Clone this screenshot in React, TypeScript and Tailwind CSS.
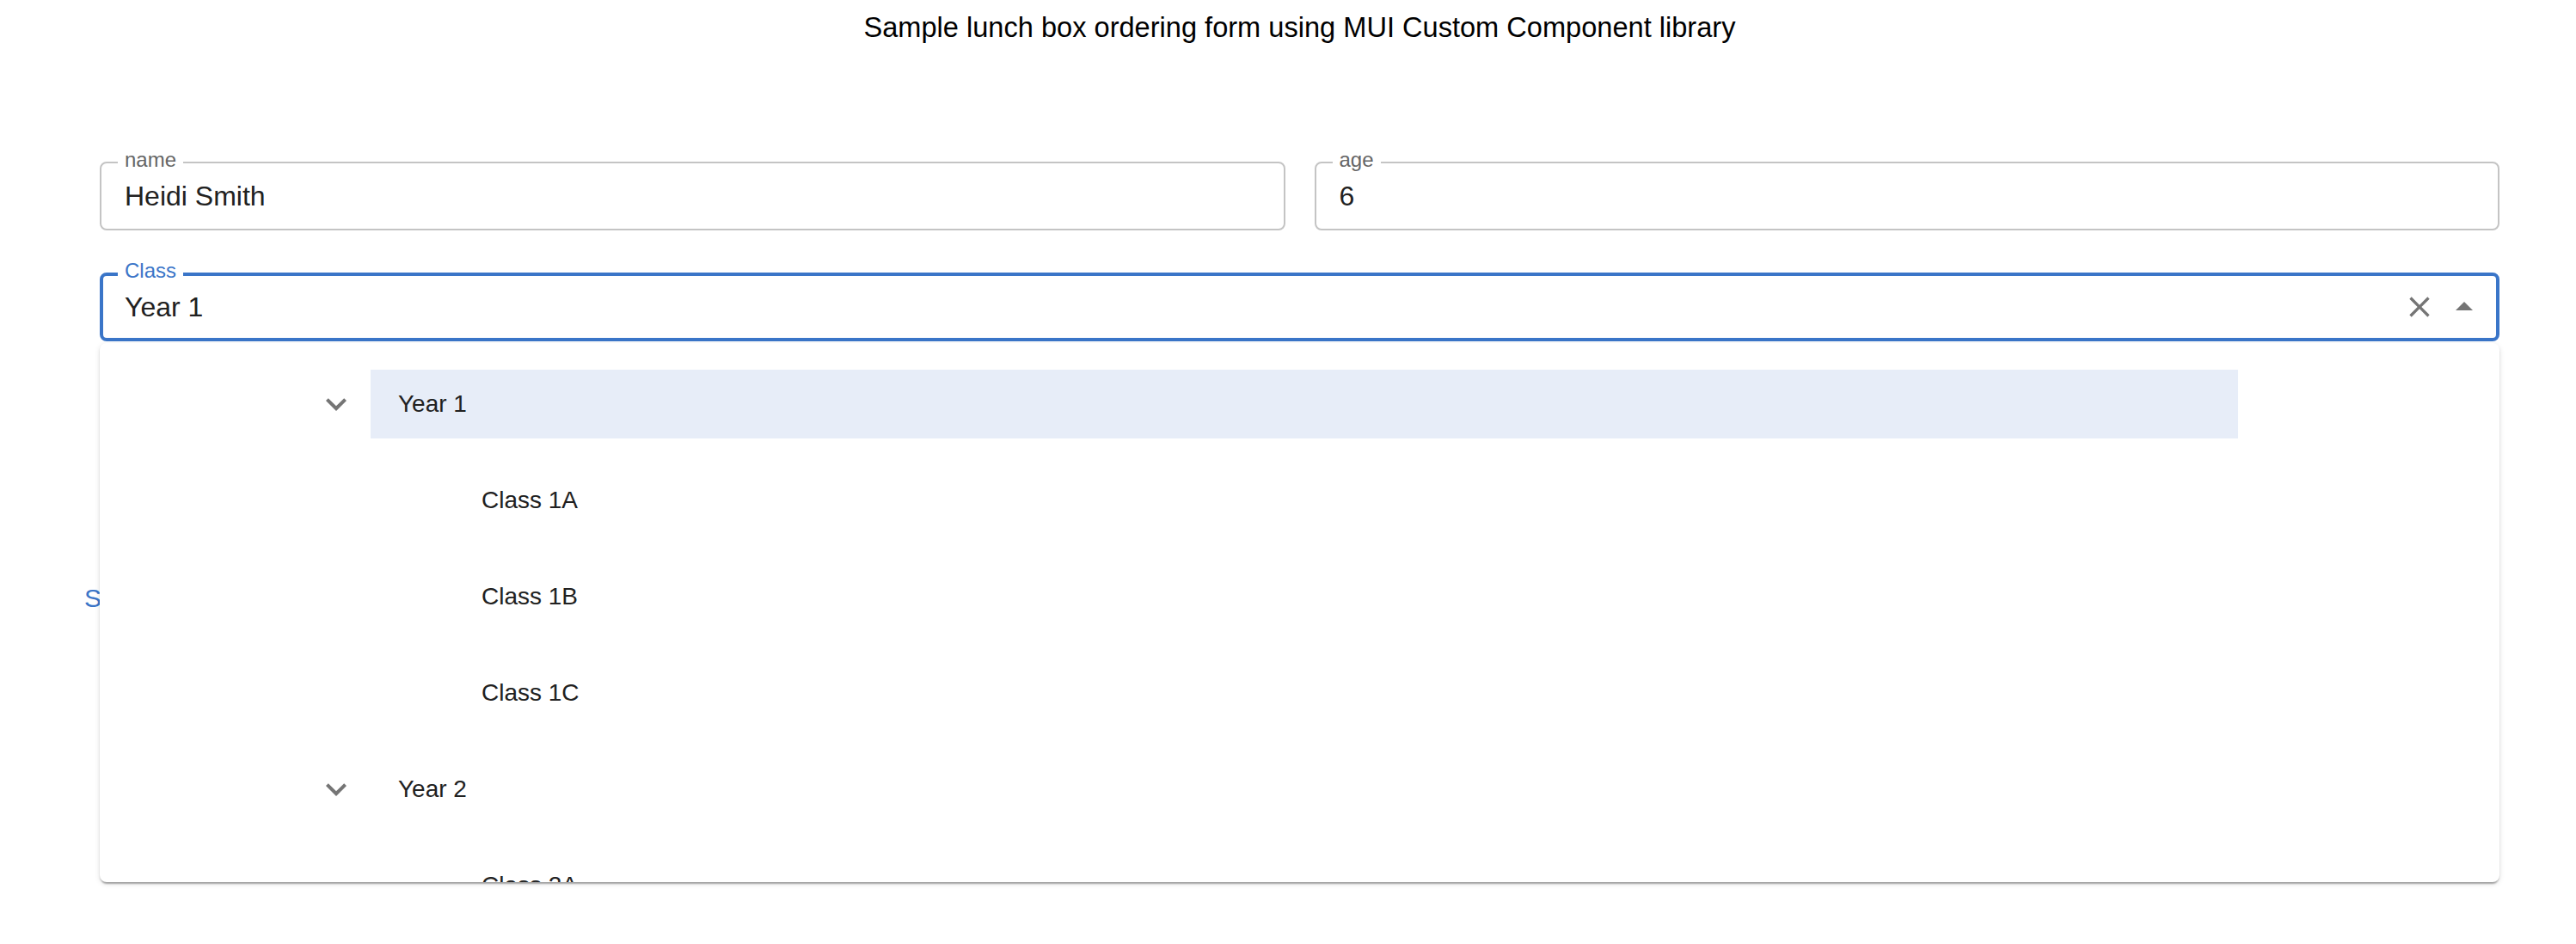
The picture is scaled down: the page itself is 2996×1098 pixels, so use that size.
import type { ReactNode } from "react";

const font = { fontFamily: '"Liberation Sans", Arial, sans-serif' };

function Icon({ d, size, className }: { d: string; size: number; className?: string }) {
  return (
    <svg viewBox="0 0 24 24" width={size} height={size} className={className} fill="currentColor">
      <path d={d} />
    </svg>
  );
}

const EXPAND_MORE = "M16.59 8.59 12 13.17 7.41 8.59 6 10l6 6 6-6z";
const CLOSE =
  "M19 6.41 17.59 5 12 10.59 6.41 5 5 6.41 10.59 12 5 17.59 6.41 19 12 13.41 17.59 19 19 17.59 13.41 12z";
const ARROW_UP = "m7 14 5-5 5 5z";

function OutlinedField({ label, value }: { label: string; value: string }) {
  return (
    <div className="relative flex h-[80px] items-center rounded-[8px] border-2 border-[#c4c4c4] pl-[27px]">
      <span className="absolute left-[19px] top-[-16px] bg-white px-[8px] text-[24px] leading-[24px] text-[#666666]">
        {label}
      </span>
      <span className="text-[32px] leading-[37px] text-[#212121]">{value}</span>
    </div>
  );
}

function TreeRow({
  indent,
  chevron,
  selected,
  children,
}: {
  indent: string;
  chevron?: boolean;
  selected?: boolean;
  children: ReactNode;
}) {
  return (
    <div className={`flex h-[112px] shrink-0 items-center ${indent}`}>
      {chevron && (
        <span className="mr-[16px] flex h-[48px] w-[48px] items-center justify-center text-[#757575]">
          <Icon d={EXPAND_MORE} size={48} />
        </span>
      )}
      <div
        className={`flex h-[80px] items-center pl-[32px] text-[28px] text-[#212121] ${
          selected ? "w-[2172px] bg-[#e7edf8]" : "w-[2075px]"
        }`}
      >
        {children}
      </div>
    </div>
  );
}

export default function App() {
  return (
    <div className="min-h-[1098px] bg-white pl-[116px] pr-[89px] pt-[13px]" style={font}>
      <h1 className="text-center text-[32.6px] leading-[37px] text-black">
        Sample lunch box ordering form using MUI Custom Component library
      </h1>

      <div className="mt-[138px] grid grid-cols-2 gap-x-[34px]">
        <OutlinedField label="name" value="Heidi Smith" />
        <OutlinedField label="age" value="6" />
      </div>

      <div className="relative mt-[49px]">
        <div className="relative flex h-[80px] items-center rounded-[8px] border-4 border-[#3a75c8] pl-[25px] pr-[13px]">
          <span className="absolute left-[17px] top-[-18px] bg-white px-[8px] text-[24px] leading-[24px] text-[#3a75c8]">
            Class
          </span>
          <span className="flex-1 text-[32px] leading-[37px] text-[#212121]">Year 1</span>
          <span className="flex h-[40px] w-[40px] items-center justify-center text-[#757575]">
            <Icon d={CLOSE} size={40} />
          </span>
          <span className="ml-[8px] flex h-[48px] w-[48px] items-center justify-center text-[#757575]">
            <Icon d={ARROW_UP} size={48} />
          </span>
        </div>

        <button className="-ml-[18px] mt-[281px] text-[30px] font-medium uppercase leading-[36px] tracking-[0.5px] text-[#3a75c8]">
          Submit
        </button>

        <div className="absolute left-0 right-0 top-[82px] z-10 flex h-[627px] flex-col overflow-hidden rounded-[8px] bg-white pt-[15px] shadow-[0_4px_2px_-2px_rgba(0,0,0,0.2),0_2px_2px_0_rgba(0,0,0,0.14),0_2px_6px_0_rgba(0,0,0,0.12)]">
          <TreeRow indent="pl-[251px]" chevron selected>
            Year 1
          </TreeRow>
          <TreeRow indent="pl-[412px]">Class 1A</TreeRow>
          <TreeRow indent="pl-[412px]">Class 1B</TreeRow>
          <TreeRow indent="pl-[412px]">Class 1C</TreeRow>
          <TreeRow indent="pl-[251px]" chevron>
            Year 2
          </TreeRow>
          <TreeRow indent="pl-[412px]">Class 2A</TreeRow>
        </div>
      </div>
    </div>
  );
}
